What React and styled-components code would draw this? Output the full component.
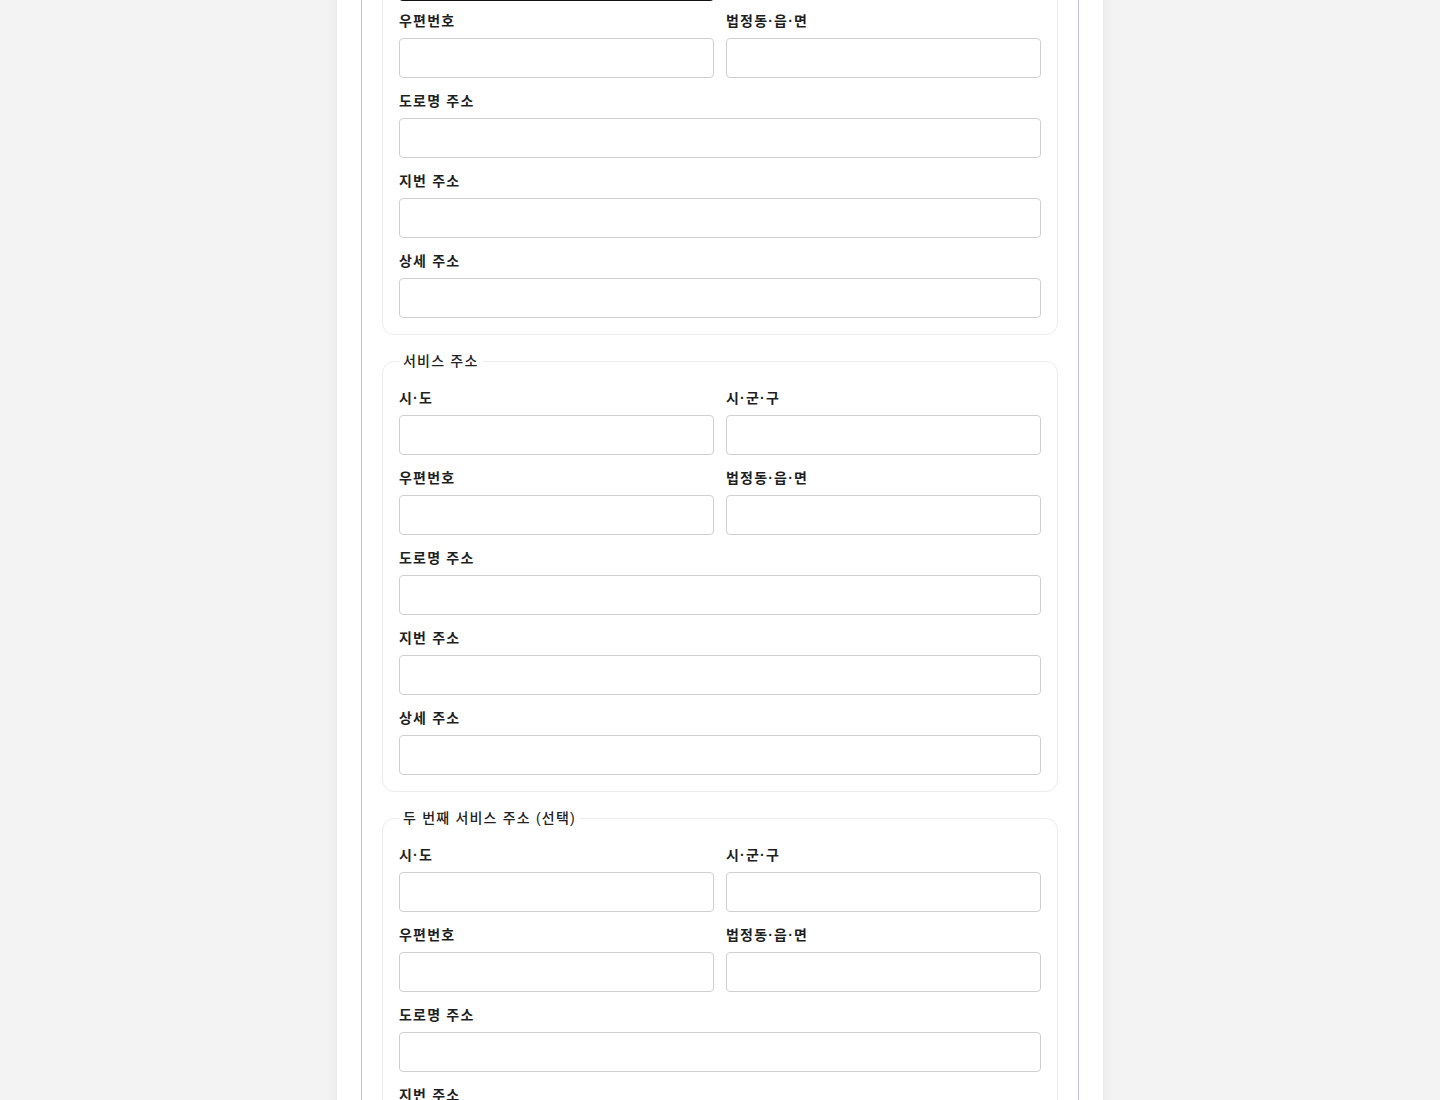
import React from 'react';
import styled, { createGlobalStyle } from 'styled-components';

const GlobalStyle = createGlobalStyle`
  html, body {
    margin: 0;
    padding: 0;
    height: 100%;
    overflow: hidden;
    background: #f3f3f3;
  }
  * {
    box-sizing: border-box;
  }
  body {
    font-family: "Liberation Sans", "Noto Sans CJK KR", sans-serif;
    color: #1f1f1f;
  }
`;

const Page = styled.div`
  height: 100vh;
  overflow: hidden;
`;

const Panel = styled.main`
  width: 766px;
  min-height: 100vh;
  margin: 0 auto;
  padding: 0 24px;
  background: #ffffff;
  box-shadow: 0 0 14px rgba(0, 0, 0, 0.06);
`;

const Form = styled.form`
  display: flex;
  flex-direction: column;
  gap: 16px;
  margin-top: -106px;
  padding: 0 20px 20px;
  min-height: 1400px;
  border-left: 1px solid #c6bff4;
  border-right: 1px solid #c6bff4;
`;

const Fieldset = styled.fieldset`
  margin: 0;
  padding: 16px;
  border: 1px solid #ececec;
  border-radius: 12px;
  display: flex;
  flex-direction: column;
  gap: 12px;
  min-width: 0;
`;

const Legend = styled.legend`
  padding: 1px 4px 0;
  font-size: 14px;
  line-height: 19px;
  font-weight: 500;
  letter-spacing: 1.2px;
  color: #222;
`;

const Row = styled.div`
  display: grid;
  grid-template-columns: ${p => (p.cols === 2 ? '1fr 1fr' : '1fr')};
  gap: 12px;
`;

const Field = styled.div`
  display: flex;
  flex-direction: column;
  min-width: 0;
`;

const Label = styled.label`
  display: block;
  padding-top: 1px;
  margin-bottom: 7px;
  font-size: 14px;
  line-height: 20px;
  font-weight: 600;
  letter-spacing: 1.2px;
  color: #1f1f1f;
`;

const Input = styled.input`
  display: block;
  width: 100%;
  height: 40px;
  padding: 0 12px;
  border: 1px solid #cfcfcf;
  border-radius: 4px;
  background: #fff;
  font-family: inherit;
  font-size: 14px;
  outline: none;
  ${p => p.focused && `
    border-color: #111;
    box-shadow: 0 0 0 2px #111, 0 2px 0 1px #111;
  `}
`;

const AddressFields = ({ id, focusFirst }) => (
  <>
    <Row cols={2}>
      <Field>
        <Label htmlFor={`${id}-sido`}>시·도</Label>
        <Input id={`${id}-sido`} focused={focusFirst} />
      </Field>
      <Field>
        <Label htmlFor={`${id}-sigungu`}>시·군·구</Label>
        <Input id={`${id}-sigungu`} />
      </Field>
    </Row>
    <Row cols={2}>
      <Field>
        <Label htmlFor={`${id}-zip`}>우편번호</Label>
        <Input id={`${id}-zip`} />
      </Field>
      <Field>
        <Label htmlFor={`${id}-dong`}>법정동·읍·면</Label>
        <Input id={`${id}-dong`} />
      </Field>
    </Row>
    <Row>
      <Field>
        <Label htmlFor={`${id}-road`}>도로명 주소</Label>
        <Input id={`${id}-road`} />
      </Field>
    </Row>
    <Row>
      <Field>
        <Label htmlFor={`${id}-jibun`}>지번 주소</Label>
        <Input id={`${id}-jibun`} />
      </Field>
    </Row>
    <Row>
      <Field>
        <Label htmlFor={`${id}-detail`}>상세 주소</Label>
        <Input id={`${id}-detail`} />
      </Field>
    </Row>
  </>
);

export default function App() {
  return (
    <Page>
      <GlobalStyle />
      <Panel>
        <Form onSubmit={e => e.preventDefault()}>
          <Fieldset>
            <Legend>사업장 주소</Legend>
            <AddressFields id="biz" focusFirst />
          </Fieldset>
          <Fieldset>
            <Legend>서비스 주소</Legend>
            <AddressFields id="svc" />
          </Fieldset>
          <Fieldset>
            <Legend>두 번째 서비스 주소 (선택)</Legend>
            <AddressFields id="svc2" />
          </Fieldset>
        </Form>
      </Panel>
    </Page>
  );
}
